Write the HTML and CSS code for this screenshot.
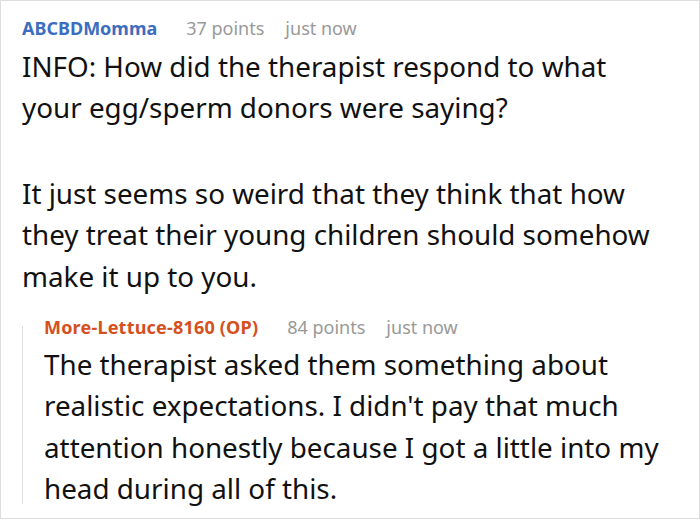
FILE: index.html
```html
<!DOCTYPE html>
<html>
<head>
<meta charset="utf-8">
<link rel="stylesheet" href="styles.css">
</head>
<body>
<div class="card">
  <div class="comment">
    <div class="meta">
      <span class="author">ABCBDMomma</span>
      <span class="points">37 points</span>
      <span class="time">just now</span>
    </div>
    <div class="body">
      <p>INFO: How did the therapist respond to what your egg/sperm donors were saying?</p>
      <p>It just seems so weird that they think that how they treat their young children should somehow make it up to you.</p>
    </div>
    <div class="reply">
      <div class="thread-line"></div>
      <div class="reply-content">
        <div class="meta">
          <span class="author op">More-Lettuce-8160 (OP)</span>
          <span class="points">84 points</span>
          <span class="time">just now</span>
        </div>
        <div class="body">
          <p>The therapist asked them something about realistic expectations. I didn't pay that much attention honestly because I got a little into my head during all of this.</p>
        </div>
      </div>
    </div>
  </div>
</div>
</body>
</html>
```
FILE: styles.css
```css
html, body {
  margin: 0;
  padding: 0;
  background: #fff;
}
body {
  font-family: "Noto Sans", "Open Sans", sans-serif;
  color: #111;
}
.card {
  box-sizing: border-box;
  width: 700px;
  height: 519px;
  margin: 0;
  border: 1px solid #dedede;
  padding: 16px 0 0 21px;
  overflow: hidden;
}
.comment {
  width: 640px;
}
.meta {
  display: flex;
  align-items: baseline;
  font-size: 18px;
  line-height: 23px;
  white-space: nowrap;
}
.author {
  font-weight: 700;
  color: #3c6dbf;
}
.author.op {
  color: #d5501d;
  letter-spacing: 0.2px;
}
.points {
  color: #999;
  margin-left: 29px;
}
.time {
  color: #999;
  margin-left: 21px;
}
.body {
  margin-top: 6px;
  font-size: 27.8px;
  line-height: 41.4px;
}
.body p {
  margin: 0 0 44px 0;
}
.body p:last-child {
  margin-bottom: 0;
}
.reply {
  display: flex;
  margin-top: 19px;
}
.thread-line {
  width: 1px;
  flex: none;
  background: #dcdcdc;
  margin: 10px 0 6px 0;
}
.reply-content {
  padding-left: 21px;
  flex: 1;
}
.reply .body {
  margin-top: 5px;
}
```
